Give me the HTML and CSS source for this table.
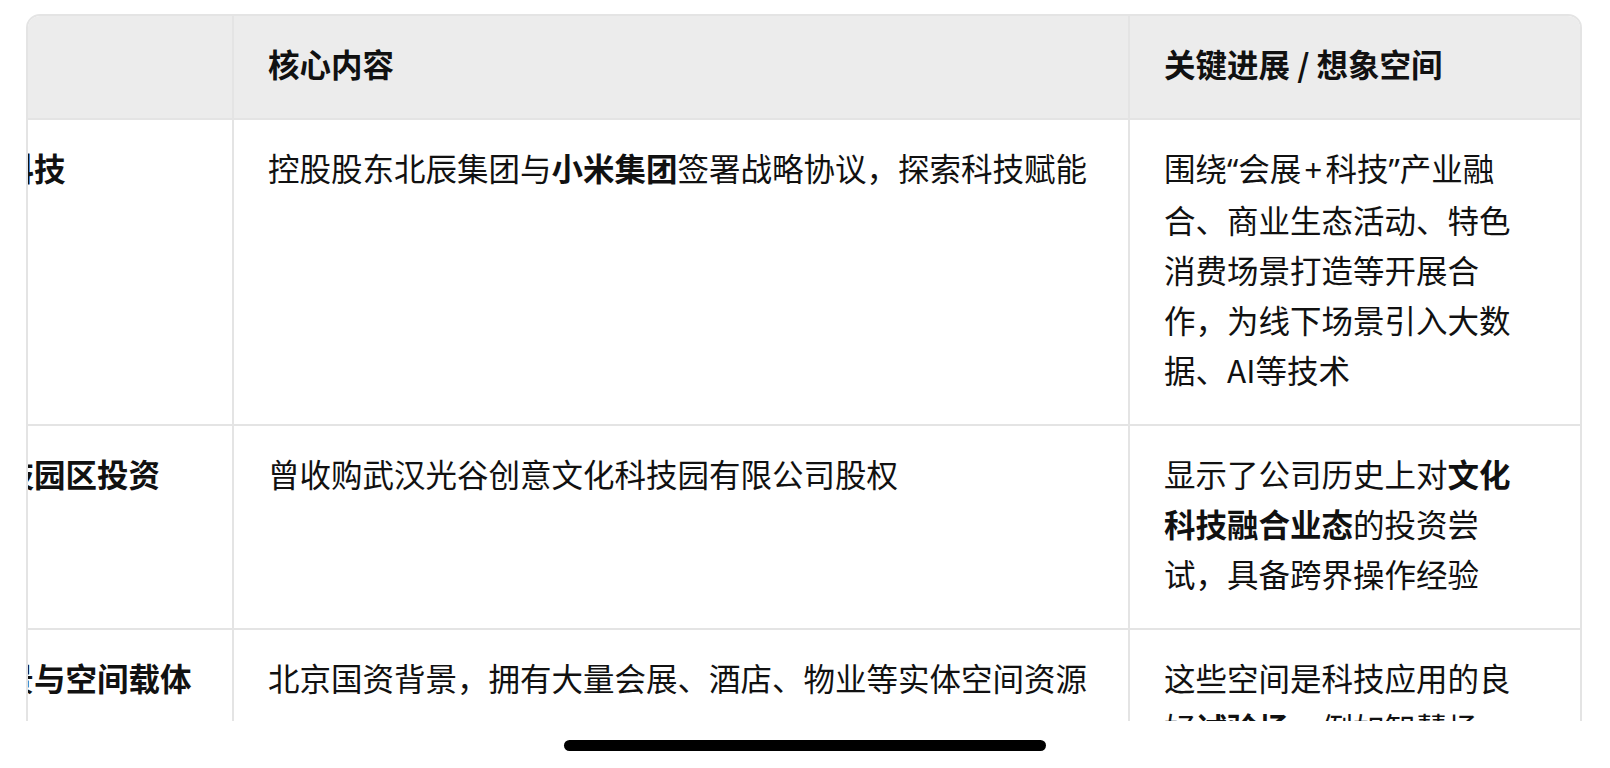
FILE: index.html
```html
<!DOCTYPE html>
<html lang="zh-CN">
<head>
<meta charset="utf-8">
<title>表格</title>
<link rel="stylesheet" href="styles.css">
</head>
<body>
<div class="screen">
  <div class="table-wrap">
    <div class="grid">
      <div class="cell head c1"></div>
      <div class="cell head c2">核心内容</div>
      <div class="cell head c3">关键进展 / 想象空间</div>

      <div class="cell c1"><strong>携手新科技</strong></div>
      <div class="cell c2">控股股东北辰集团与<strong>小米集团</strong>签署战略协议，探索科技赋能</div>
      <div class="cell c3">围绕<span class="lat">“</span>会展<span class="lat plus">+</span>科技<span class="lat">”</span>产业融合、商业生态活动、特色消费场景打造等开展合作，为线下场景引入大数据、AI等技术</div>

      <div class="cell c1"><strong>文化科技园区投资</strong></div>
      <div class="cell c2">曾收购武汉光谷创意文化科技园有限公司股权</div>
      <div class="cell c3">显示了公司历史上对<strong>文化科技融合业态</strong>的投资尝试，具备跨界操作经验</div>

      <div class="cell c1"><strong>国资背景与空间载体</strong></div>
      <div class="cell c2">北京国资背景，拥有大量会展、酒店、物业等实体空间资源</div>
      <div class="cell c3">这些空间是科技应用的良好<strong>试验场</strong>，例如智慧场馆、智慧酒店等数字化改造</div>
    </div>
  </div>
</div>
<div class="home-area">
  <div class="home-bar"></div>
</div>
</body>
</html>
```

FILE: styles.css
```css
html, body {
  margin: 0;
  padding: 0;
  background: #ffffff;
}

body {
  font-family: "Noto Sans CJK SC", "Noto Sans", sans-serif;
  color: #111111;
  width: 1610px;
  height: 768px;
  overflow: hidden;
}

.screen {
  height: 721px;
  overflow: hidden;
  padding: 14px 0 0 26px;
  box-sizing: border-box;
}

.table-wrap {
  width: 1556px;
  box-sizing: border-box;
  border: 2px solid #e4e4e4;
  border-radius: 14px;
  overflow: hidden;
}

.grid {
  display: grid;
  grid-template-columns: 360px 896px 450px;
  width: 1706px;
  margin-left: -154px;
}

.cell {
  box-sizing: border-box;
  font-size: 31.5px;
  line-height: 50px;
  padding: 22px 34px 30px;
  border-right: 2px solid #e4e4e4;
  border-bottom: 2px solid #e4e4e4;
}

.cell strong {
  font-weight: 700;
}

.lat {
  font-family: "Noto Sans", "Liberation Sans", sans-serif;
}

.plus {
  margin: 0 3px;
}

.c1 {
  white-space: nowrap;
}

.c3 {
  border-right: none;
  padding-right: 46px;
}

.head {
  background: #ececec;
  font-weight: 700;
}

.home-area {
  height: 47px;
  display: flex;
  justify-content: center;
  align-items: flex-start;
}

.home-bar {
  margin-top: 19px;
  width: 482px;
  height: 11px;
  border-radius: 6px;
  background: #000000;
}
```
